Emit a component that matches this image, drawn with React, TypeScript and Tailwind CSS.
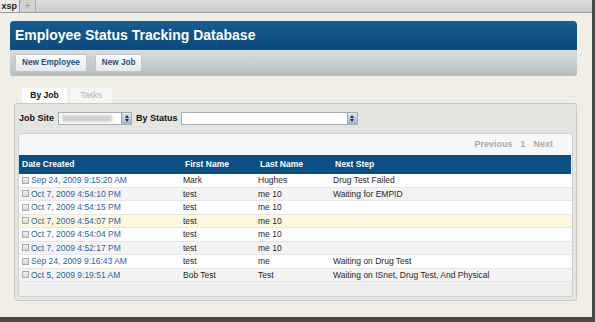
const rows = [
    { date: 'Sep 24, 2009 9:15:20 AM', first: 'Mark', last: 'Hughes', step: 'Drug Test Failed' },
    { date: 'Oct 7, 2009 4:54:10 PM', first: 'test', last: 'me 10', step: 'Waiting for EMPID' },
    { date: 'Oct 7, 2009 4:54:15 PM', first: 'test', last: 'me 10', step: '' },
    { date: 'Oct 7, 2009 4:54:07 PM', first: 'test', last: 'me 10', step: '' },
    { date: 'Oct 7, 2009 4:54:04 PM', first: 'test', last: 'me 10', step: '' },
    { date: 'Oct 7, 2009 4:52:17 PM', first: 'test', last: 'me 10', step: '' },
    { date: 'Sep 24, 2009 9:16:43 AM', first: 'test', last: 'me', step: 'Waiting on Drug Test' },
    { date: 'Oct 5, 2009 9:19:51 AM', first: 'Bob Test', last: 'Test', step: 'Waiting on ISnet, Drug Test, And Physical' },
];

function Spinner() {
    return (
        <div className="w-[10px] h-full flex flex-col items-center justify-center gap-[1px] bg-gradient-to-b from-[#dde7f2] to-[#9db5cf] border-l border-[#9aa9b8]">
            <div className="w-0 h-0 border-l-[2px] border-r-[2px] border-b-[3px] border-l-transparent border-r-transparent border-b-[#1c2f4a]" />
            <div className="w-0 h-0 border-l-[2px] border-r-[2px] border-t-[3px] border-l-transparent border-r-transparent border-t-[#1c2f4a]" />
        </div>
    );
}

export default function App() {
    return (
        <div className="w-[595px] h-[322px] flex flex-col bg-[#f1efe5] overflow-hidden font-['Liberation_Sans',Arial,sans-serif]">
            <div className="flex flex-1 min-h-0">
                <div className="flex-1 flex flex-col min-w-0">
                    {/* browser tab strip */}
                    <div className="h-[13px] flex bg-gradient-to-b from-[#dedede] to-[#c9c9c9] border-b border-[#9c9c9c]">
                        <div className="w-[20px] flex justify-end items-center pr-[2px] bg-[#ebebeb] border-r border-[#9c9c9c] text-[9px] font-bold text-[#222] leading-none">
                            xsp
                        </div>
                        <div className="w-[16px] flex justify-center items-center bg-[#d2d2d2] border-r border-[#a8a8a8] text-[10px] text-[#9a9a9a] leading-none">
                            +
                        </div>
                    </div>

                    <div className="flex-1 pl-[10px] pr-[15px] pt-[8px] flex flex-col">
                        {/* header */}
                        <div className="h-[29px] rounded-t-[4px] bg-gradient-to-b from-[#165b92] to-[#0a4a7e] pl-[5px] flex items-center">
                            <span className="text-[14px] font-bold text-white">Employee Status Tracking Database</span>
                        </div>

                        {/* toolbar */}
                        <div className="h-[26px] rounded-b-[3px] bg-gradient-to-b from-[#d9dddd] to-[#b7bdbf] px-[5px] flex items-center gap-[8px]">
                            <button className="h-[18px] px-[6px] rounded-[2px] border border-[#c3c7c9] bg-gradient-to-b from-white to-[#e6e8e9] text-[8.2px] font-bold text-[#1d4f80]">
                                New Employee
                            </button>
                            <button className="h-[18px] px-[6px] rounded-[2px] border border-[#c3c7c9] bg-gradient-to-b from-white to-[#e6e8e9] text-[8.2px] font-bold text-[#1d4f80]">
                                New Job
                            </button>
                        </div>

                        {/* tabs */}
                        <div className="mt-[12px] ml-[12px] flex gap-[3px] h-[15px]">
                            <div className="w-[45px] rounded-t-[2px] bg-white flex items-center justify-center text-[8.5px] font-bold text-[#111]">
                                By Job
                            </div>
                            <div className="w-[42px] rounded-t-[2px] bg-[#f5f5f3] flex items-center justify-center text-[8.5px] text-[#b4b4b4]">
                                Tasks
                            </div>
                        </div>

                        {/* panel */}
                        <div className="ml-[4px] h-[198px] border border-[#c6cac6] rounded-[3px] bg-[#e3e5e1] px-[3px] flex flex-col">
                            <div className="h-[29px] flex items-center pl-[1px] text-[9px] font-bold text-[#111]">
                                <span>Job Site</span>
                                <div className="ml-[4px] w-[74px] h-[13px] bg-white border border-[#a7acb1] flex">
                                    <div className="flex-1 flex items-center px-[3px]">
                                        <div className="w-[50px] h-[7px] bg-[#cfcfcf] blur-[1.5px]" />
                                    </div>
                                    <Spinner />
                                </div>
                                <span className="ml-[4px]">By Status</span>
                                <div className="ml-[3px] w-[177px] h-[13px] bg-white border border-[#a7acb1] flex">
                                    <div className="flex-1" />
                                    <Spinner />
                                </div>
                            </div>

                            {/* inner grid panel */}
                            <div className="h-[164px] border border-[#cfd2cf] rounded-[3px] bg-[#f8f8f8] flex flex-col overflow-hidden">
                                <div className="h-[21px] flex items-center justify-end pr-[19px] gap-[8px] text-[9px] font-bold text-[#a9a9a9]">
                                    <span>Previous</span>
                                    <span>1</span>
                                    <span>Next</span>
                                </div>
                                <div className="h-[19px] mr-[1px] bg-[#0b4f85] grid grid-cols-[162px_75px_75px_1fr] items-center text-[8.5px] font-bold text-white">
                                    <span className="pl-[3px]">Date Created</span>
                                    <span className="pl-[4px]">First Name</span>
                                    <span className="pl-[4px]">Last Name</span>
                                    <span className="pl-[4px]">Next Step</span>
                                </div>
                                {rows.map((r, i) => (
                                    <div
                                        key={i}
                                        className={`h-[13.5px] grid grid-cols-[162px_75px_75px_1fr] items-center text-[8.5px] text-[#262626] border-b border-[#e6e6e6] ${
                                            i === 3 ? 'bg-[#fdf7dd]' : i % 2 === 1 ? 'bg-[#f4f4f4]' : 'bg-white'
                                        }`}
                                    >
                                        <div className="flex items-center pl-[3px] gap-[2px]">
                                            <div className="w-[7px] h-[7px] border border-[#a9a9a9] bg-gradient-to-b from-[#f2f2f2] to-[#d8d8d8]" />
                                            <span className="text-[#2b63a6]">{r.date}</span>
                                        </div>
                                        <span className="pl-[2px]">{r.first}</span>
                                        <span className="pl-[2px]">{r.last}</span>
                                        <span className="pl-[2px] whitespace-nowrap">{r.step}</span>
                                    </div>
                                ))}
                                <div className="flex-1 bg-[#efefef]" />
                            </div>
                        </div>
                    </div>
                </div>
                <div className="w-[3px] bg-[#4a4a4a]" />
            </div>
            <div className="h-[5px] bg-[#4a4a4a]" />
        </div>
    );
}
